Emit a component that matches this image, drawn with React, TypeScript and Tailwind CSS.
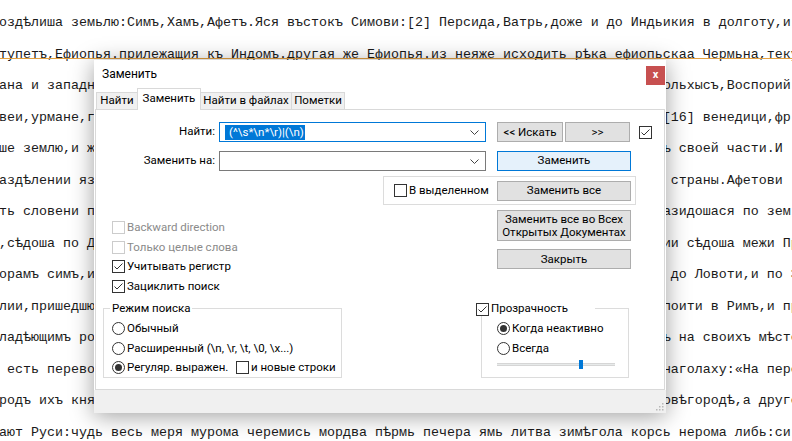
import React from 'react'

// editor lines: full lines, or [left visible part, right visible part] around the dialog
const lines: (string | [string, string])[] = [
  'оздѣлиша земьлю:Симъ,Хамъ,Афетъ.Яся въстокъ Симови:[2] Персида,Ватрь,доже и до Индьикия в долготу,и',
  'тупетъ,Ефиопья.прилежащия къ Индомъ.другая же Ефиопья.из неяже исходить рѣка ефиопьскаа Чермьна,теку',
  ['ана и западн', 'ольхысъ,Воспорий'],
  ['веи,урмане,г', '[16] венедици,фр'],
  ['ше землю,и ж', 'ъ своей части.И '],
  ['аздѣлении яз', ' страны.Афетови '],
  ['ть словени п', 'азидошася по зем'],
  [',сѣдоша по Д', 'ии сѣдоша межи Пр'],
  ['орамъ симъ,и', ' до Ловоти,и по З'],
  ['лии,пришедшю', 'поити в Римъ,и пр'],
  ['ладѣющимъ ро', 'ъ на своихъ мѣсте'],
  [' есть перево', 'наголаху:«На пере'],
  ['родъ ихъ кня', 'овѣгородѣ,а друго'],
  'ают Руси:чудь весь меря мурома черемись мордва пѣрмь печера ямь литва зимѣгола корсь нерома либь:си',
]

const Check = ({ checked = false, disabled = false }: { checked?: boolean; disabled?: boolean }) => (
  <span
    className={`w-[13px] h-[13px] shrink-0 flex items-center justify-center bg-white border ${
      disabled ? 'border-[#cccccc]' : 'border-[#333333]'
    }`}
  >
    {checked && (
      <svg width="11" height="11" viewBox="0 0 11 11">
        <path d="M1.5 5.5 L4 8 L9.5 2.5" fill="none" stroke="#333" strokeWidth="1" />
      </svg>
    )}
  </span>
)

const Radio = ({ checked = false }: { checked?: boolean }) => (
  <span className="w-[13px] h-[13px] shrink-0 rounded-full border border-[#333333] bg-white flex items-center justify-center">
    {checked && <span className="w-[7px] h-[7px] rounded-full bg-[#333333]" />}
  </span>
)

const Btn = ({ children, className = '' }: { children: React.ReactNode; className?: string }) => (
  <div
    className={`flex items-center justify-center text-center leading-[13px] border border-[#adadad] bg-[#e1e1e1] ${className}`}
  >
    {children}
  </div>
)

const Chevron = () => (
  <svg width="9" height="5" viewBox="0 0 9 5" className="shrink-0">
    <path d="M0.5 0.5 L4.5 4.5 L8.5 0.5" fill="none" stroke="#444" strokeWidth="1" />
  </svg>
)

const Combo = ({ focused = false, children }: { focused?: boolean; children?: React.ReactNode }) => (
  <div
    className={`w-[267px] h-[20px] bg-white border flex items-center pl-[5px] pr-[6px] ${
      focused ? 'border-[#0078d7]' : 'border-[#7a7a7a]'
    }`}
  >
    <div className="flex-1 flex items-center">{children}</div>
    <Chevron />
  </div>
)

const Tab = ({ label, w, active = false }: { label: string; w: string; active?: boolean }) => (
  <div
    className={`${w} flex items-center justify-center whitespace-nowrap border border-[#d9d9d9] border-b-0 -mr-[1px] ${
      active ? 'h-[22px] bg-white -mb-[1px] relative z-10 pb-[2px]' : 'h-[17px] bg-[#f0f0f0]'
    }`}
  >
    {label}
  </div>
)

export default function App() {
  return (
    <div className="relative w-[792px] h-[441px] overflow-hidden bg-white">
      {/* editor text */}
      <div className="font-['Liberation_Mono',monospace] text-[13.33px] leading-[31.5px] pt-[7px] -ml-[1px] whitespace-pre text-[#1a1a1a]">
        {lines.map((l, i) =>
          typeof l === 'string' ? (
            <div key={i}>{l}</div>
          ) : (
            <div key={i}>
              <span>{l[0]}</span>
              <span className="inline-block w-[567.9px]" />
              <span>{l[1]}</span>
            </div>
          )
        )}
      </div>
      <div className="absolute left-0 top-[58px] w-full h-[1px] bg-[#e3a03f]" />

      {/* Replace dialog */}
      <div className="absolute left-[94px] top-[60px] w-[572px] h-[353px] bg-white shadow-[0_3px_22px_rgba(0,0,0,0.38)] font-['Roboto','Noto_Sans',sans-serif] text-[11.5px] text-black flex flex-col">
        <div className="h-[28px] flex items-start shrink-0">
          <span className="pl-[8px] pt-[6px] leading-[16px] text-[12px]">Заменить</span>
          <div className="ml-auto mr-[1px] mt-[6px] w-[19px] h-[19px] bg-[#c75050] text-white flex items-center justify-center font-bold text-[11px] leading-none pb-[2px]">
            x
          </div>
        </div>

        <div className="h-[21px] flex items-end pl-[2px] shrink-0">
          <Tab label="Найти" w="w-[42px]" />
          <Tab label="Заменить" w="w-[64px]" active />
          <Tab label="Найти в файлах" w="w-[92px]" />
          <Tab label="Пометки" w="w-[54px]" />
        </div>

        <div className="ml-[1px] w-[570px] h-[281px] border border-[#d9d9d9] bg-white flex flex-col pt-[12px] shrink-0">
          {/* find row */}
          <div className="flex items-center h-[20px]">
            <div className="w-[123px] text-right pr-[4px]">Найти:</div>
            <Combo focused>
              <span className="bg-[#0078d7] text-white leading-[15px] pl-[4px] pr-[1px] whitespace-pre">{'(^\\s*\\n*\\r)|(\\n)'}</span>
            </Combo>
            <Btn className="ml-[11px] w-[66px] h-[20px]">&lt;&lt; Искать</Btn>
            <Btn className="ml-[2px] w-[65px] h-[20px]">&gt;&gt;</Btn>
            <span className="ml-[9px]">
              <Check checked />
            </span>
          </div>

          {/* replace row */}
          <div className="flex items-center h-[20px] mt-[9px]">
            <div className="w-[123px] text-right pr-[4px]">Заменить на:</div>
            <Combo />
            <div className="ml-[11px] w-[134px] h-[20px] flex items-center justify-center border border-[#0078d7] bg-[#e5f1fb]">
              Заменить
            </div>
          </div>

          {/* in selection */}
          <div className="ml-[287px] mt-[5px] w-[253px] h-[29px] border border-[#dcdcdc] flex items-center">
            <div className="w-[113px] pl-[10px] flex items-center gap-[2px]">
              <Check />
              <span>В выделенном</span>
            </div>
            <Btn className="w-[134px] h-[20px]">Заменить все</Btn>
          </div>

          <div className="flex">
            <div className="w-[401px] pl-[16px] pt-[13px] flex flex-col">
              <div className="h-[19.5px] flex items-center gap-[2px] text-[#8a8a8a]">
                <Check disabled />
                <span>Backward direction</span>
              </div>
              <div className="h-[19.5px] flex items-center gap-[2px] text-[#8a8a8a]">
                <Check disabled />
                <span>Только целые слова</span>
              </div>
              <div className="h-[19.5px] flex items-center gap-[2px]">
                <Check checked />
                <span>Учитывать регистр</span>
              </div>
              <div className="h-[19.5px] flex items-center gap-[2px]">
                <Check checked />
                <span>Зациклить поиск</span>
              </div>
            </div>
            <div className="w-[134px] pt-[5px] flex flex-col">
              <Btn className="h-[31px]">
                Заменить все во Всех
                <br />
                Открытых Документах
              </Btn>
              <Btn className="h-[20px] mt-[8px]">Закрыть</Btn>
            </div>
          </div>

          {/* groups */}
          <div className="flex mt-[12px]">
            <div className="relative ml-[7px] w-[239px] h-[70px] border border-[#dcdcdc] pl-[8px] pt-[10px]">
              <span className="absolute -top-[9px] left-[6px] bg-white px-[2px] leading-[16px]">Режим поиска</span>
              <div className="h-[19.5px] flex items-center gap-[2px]">
                <Radio />
                <span>Обычный</span>
              </div>
              <div className="h-[19.5px] flex items-center gap-[2px]">
                <Radio />
                <span>Расширенный (\n, \r, \t, \0, \x...)</span>
              </div>
              <div className="h-[19.5px] flex items-center gap-[2px]">
                <Radio checked />
                <span className="w-[107px] whitespace-nowrap">Регуляр. выражен.</span>
                <Check />
                <span>и новые строки</span>
              </div>
            </div>

            <div className="relative ml-[139px] w-[148px] h-[70px] border border-[#dcdcdc] pl-[15px] pt-[10px]">
              <div className="absolute -top-[7px] -left-[6px] w-[119px] h-[14px] bg-white flex items-center gap-[2px]">
                <Check checked />
                <span>Прозрачность</span>
              </div>
              <div className="h-[19.5px] flex items-center gap-[2px]">
                <Radio checked />
                <span>Когда неактивно</span>
              </div>
              <div className="h-[19.5px] flex items-center gap-[2px]">
                <Radio />
                <span>Всегда</span>
              </div>
              <div className="relative w-[118px] h-[9px] mt-[2px]">
                <div className="absolute left-0 top-[3px] w-full h-[3px] bg-[#e7eaea] border-y border-[#d6d6d6]" />
                <div className="absolute left-[82px] top-0 w-[4px] h-[9px] bg-[#0078d7]" />
              </div>
            </div>
          </div>
        </div>

        <div className="relative flex-1 bg-[#f0f0f0]">
          <svg width="8" height="8" viewBox="0 0 8 8" className="absolute right-[2px] bottom-[2px]">
            <rect x="6" y="0" width="1.5" height="1.5" fill="#b8b8b8" />
            <rect x="3" y="3" width="1.5" height="1.5" fill="#b8b8b8" />
            <rect x="6" y="3" width="1.5" height="1.5" fill="#b8b8b8" />
            <rect x="0" y="6" width="1.5" height="1.5" fill="#b8b8b8" />
            <rect x="3" y="6" width="1.5" height="1.5" fill="#b8b8b8" />
            <rect x="6" y="6" width="1.5" height="1.5" fill="#b8b8b8" />
          </svg>
        </div>
      </div>
    </div>
  )
}
